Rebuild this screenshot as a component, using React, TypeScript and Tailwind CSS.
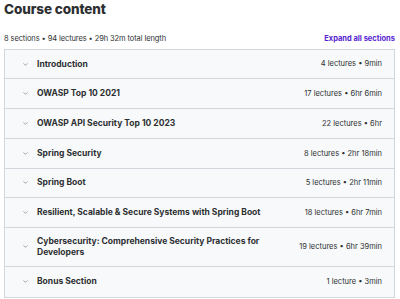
import { ChevronDown } from "lucide-react";

const sections = [
  { title: "Introduction", meta: "4 lectures • 9min" },
  { title: "OWASP Top 10 2021", meta: "17 lectures • 6hr 6min" },
  { title: "OWASP API Security Top 10 2023", meta: "22 lectures • 6hr" },
  { title: "Spring Security", meta: "8 lectures • 2hr 18min" },
  { title: "Spring Boot", meta: "5 lectures • 2hr 11min" },
  { title: "Resilient, Scalable & Secure Systems with Spring Boot", meta: "18 lectures • 6hr 7min" },
  { title: "Cybersecurity: Comprehensive Security Practices for Developers", meta: "19 lectures • 6hr 39min" },
  { title: "Bonus Section", meta: "1 lecture • 3min" },
];

export default function App() {
  return (
    <div className="w-[400px] h-[299px] overflow-hidden bg-white pl-[4px] pr-[5px] text-[#2d2f31] font-['Inter',sans-serif]">
      <h2 className="text-[13.5px] font-extrabold leading-none pt-[3px] tracking-[-0.1px]">
        Course content
      </h2>

      <div className="flex items-center justify-between mt-[16px]">
        <p className="text-[7.5px] tracking-[-0.1px] text-[#2d2f31]">
          8 sections • 94 lectures • 29h 32m total length
        </p>
        <button className="text-[7.5px] font-bold text-[#5624d0]">
          Expand all sections
        </button>
      </div>

      <div className="mt-[5px] border border-[#d1d7dc]">
        {sections.map((section, index) => (
          <SectionRow key={index} title={section.title} meta={section.meta} />
        ))}
      </div>
    </div>
  );
}

function SectionRow({ title, meta }: { title: string; meta: string }) {
  return (
    <div className="flex items-center gap-[8px] min-h-[29.7px] py-[8px] pl-[17px] pr-[12px] bg-[#f7f9fa] border-b border-[#d1d7dc] last:border-b-0">
      <ChevronDown className="w-[7px] h-[7px] shrink-0 text-[#6a6f73]" strokeWidth={2} />
      <p className="flex-1 text-[8.5px] font-bold leading-[11px]">{title}</p>
      <p className="text-[7.5px] text-[#2d2f31] whitespace-nowrap">{meta}</p>
    </div>
  );
}
